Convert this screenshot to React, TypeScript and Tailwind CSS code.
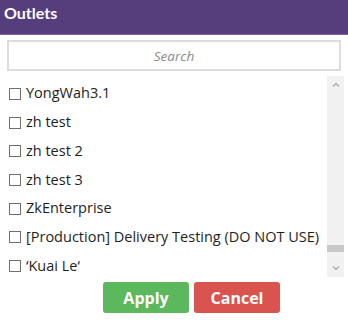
import React from "react";

const items = [
  "YongWah3.1",
  "zh test",
  "zh test 2",
  "zh test 3",
  "ZkEnterprise",
  "[Production] Delivery Testing (DO NOT USE)",
  "\u2018Kuai Le\u2018",
];

export default function App() {
  return (
    <div
      className="w-[348px] h-[322px] bg-white flex flex-col overflow-hidden"
      style={{ fontFamily: '"Open Sans", "Noto Sans", sans-serif' }}
    >
      <div className="h-[35px] bg-[#563d7c] border-b border-[#7a63a0] flex items-center px-[4px]">
        <span
          className="text-white font-bold text-[16px] leading-none -mt-[9px]"
          style={{ fontFamily: 'Lato, "Open Sans", sans-serif' }}
        >
          Outlets
        </span>
      </div>
      <div className="px-[7px] pt-[5px]">
        <div className="h-[31px] border-2 border-[#dcdcdc] flex items-center justify-center">
          <span className="italic text-[#8a8a8a] text-[13.5px] mt-[2px]">Search</span>
        </div>
      </div>
      <div className="flex mt-[5px] h-[201px] pl-[9px] pr-[4px]">
        <div className="flex-1 flex flex-col pt-[3px]">
          {items.map((t) => (
            <div key={t} className="h-[28.7px] flex items-center gap-[5px] shrink-0">
              <div className="w-[12px] h-[12px] border border-[#6f6f6f] bg-white shrink-0 mt-[1px]" />
              <span className="text-[14.5px] text-[#1e1e1e] whitespace-nowrap">{t}</span>
            </div>
          ))}
        </div>
        <div className="w-[17px] bg-[#f1f1f1] flex flex-col items-center">
          <div className="h-[17px] w-full flex items-center justify-center">
            <svg width="8" height="5" viewBox="0 0 8 5">
              <path d="M1 4.5 L4 1.5 L7 4.5" stroke="#a3a3a3" strokeWidth="1.2" fill="none" />
            </svg>
          </div>
          <div className="flex-1" />
          <div className="h-[7px] w-full bg-[#c8c8c8] mb-[8px]" />
          <div className="h-[17px] w-full flex items-center justify-center">
            <svg width="8" height="5" viewBox="0 0 8 5">
              <path d="M1 0.5 L4 3.5 L7 0.5" stroke="#a3a3a3" strokeWidth="1.2" fill="none" />
            </svg>
          </div>
        </div>
      </div>
      <div className="flex justify-center gap-[5px] mt-[5px] pl-[35px]">
        <button className="w-[86px] h-[31px] rounded-[3px] bg-[#5cb85c] text-white font-bold text-[16px]">
          Apply
        </button>
        <button className="w-[86px] h-[31px] rounded-[3px] bg-[#d9534f] text-white font-bold text-[16px]">
          Cancel
        </button>
      </div>
    </div>
  );
}
